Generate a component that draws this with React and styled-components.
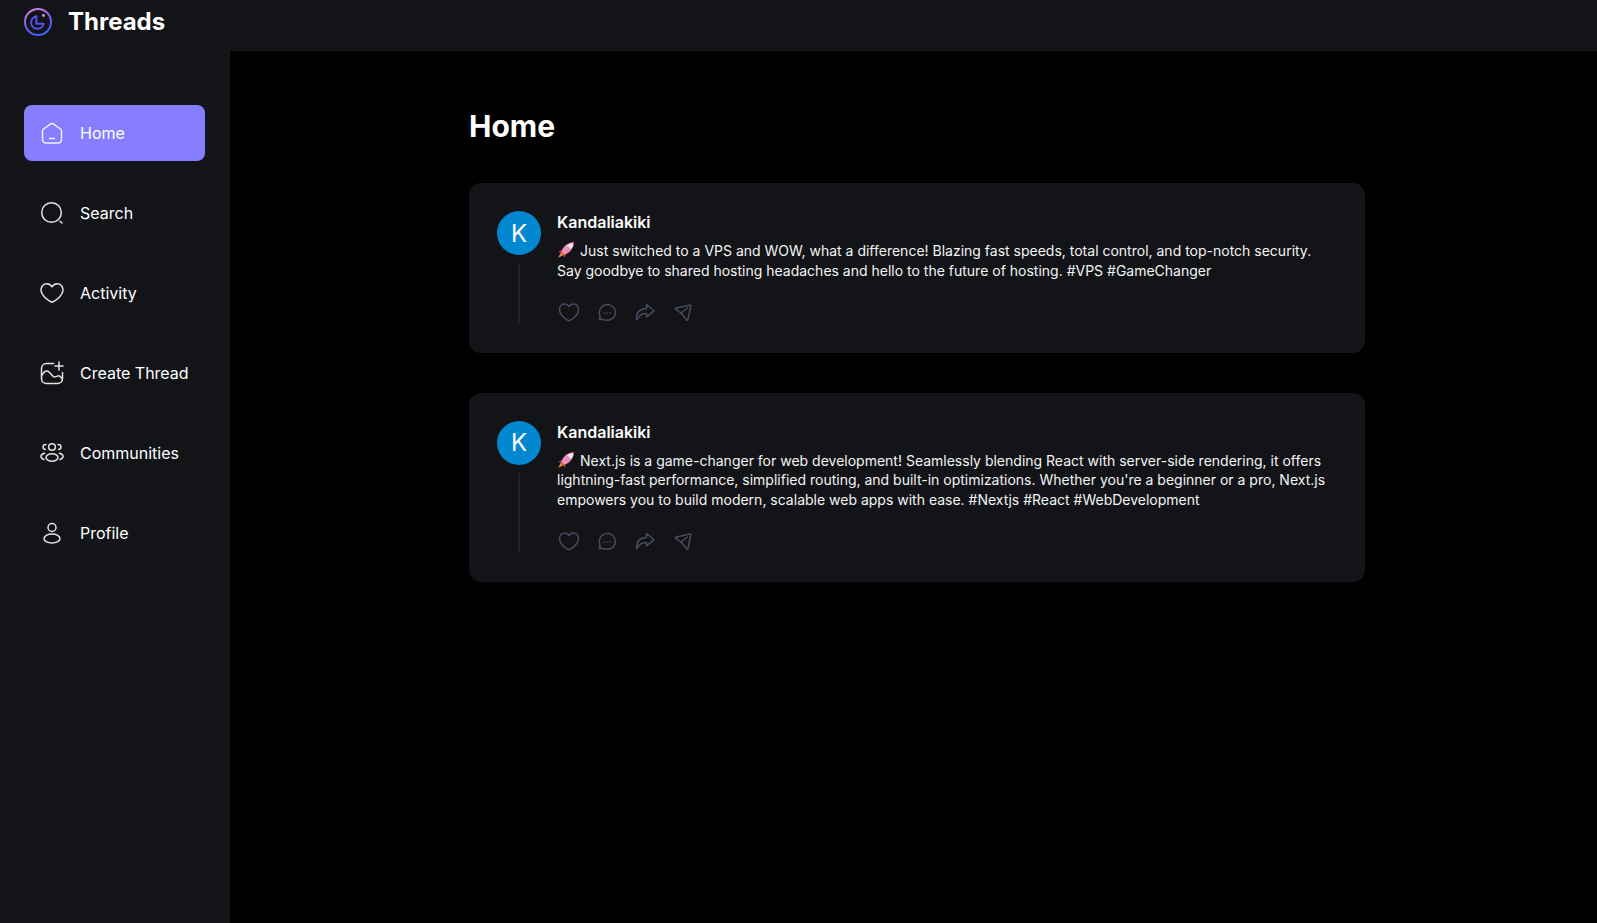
import React from 'react';
import styled, { createGlobalStyle } from 'styled-components';

const GlobalStyle = createGlobalStyle`
  * { box-sizing: border-box; }
  html, body { margin: 0; padding: 0; background: #000; }
  body { font-family: Inter, "Noto Sans", sans-serif; color: #fff; }
`;

const stroke = {
  fill: 'none',
  stroke: 'currentColor',
  strokeWidth: 1.5,
  strokeLinecap: 'round',
  strokeLinejoin: 'round',
};

const HomeIcon = () => (
  <svg width="24" height="24" viewBox="0 0 24 24" {...stroke}>
    <path d="M2.500 10.200c0-.9.4-1.700 1.100-2.200l6.700-4.900c1-.8 2.400-.8 3.400 0l6.700 4.900c.7.5 1.100 1.300 1.100 2.200v8.300c0 1.900-1.500 3.400-3.400 3.400H5.900c-1.900 0-3.400-1.500-3.400-3.400z" />
    <path d="M9.500 17.500h5" />
  </svg>
);

const SearchIcon = () => (
  <svg width="24" height="24" viewBox="0 0 24 24" {...stroke}>
    <circle cx="11.500" cy="11.500" r="9.800" />
    <path d="M20 20.200l2 1.800" />
  </svg>
);

const HeartIcon = () => (
  <svg width="24" height="24" viewBox="0 0 24 24" {...stroke}>
    <path d="M12 21.200C10.800 20.900 1 15.800 1 8.600 1 5.300 3.600 2.800 6.700 2.800c2.100 0 4 1 5.300 3 1.300-2 3.200-3 5.300-3 3.100 0 5.700 2.500 5.700 5.800 0 7.200-9.800 12.300-11 12.600z" />
  </svg>
);

const CreateIcon = () => (
  <svg width="24" height="24" viewBox="0 0 24 24" {...stroke}>
    <path d="M13.500 2.500H6.500C3.700 2.500 1.500 4.700 1.500 7.500v10c0 2.800 2.200 5 5 5h11c2.800 0 5-2.200 5-5v-6" />
    <path d="M19 1v8M15 5h8" />
    <path d="M1.500 15c1.800-3.500 4.200-5.500 6.300-4.800 2.300.8 3.500 4.200 5.700 5.400 2.600 1.400 4.500-1.600 5.700-.8 1.400.9 2.500 2 3.300 3.200" />
  </svg>
);

const CommunitiesIcon = () => (
  <svg width="24" height="24" viewBox="0 0 24 24" {...stroke}>
    <ellipse cx="12" cy="6" rx="3.400" ry="3.200" />
    <ellipse cx="12" cy="16.500" rx="6" ry="3.800" />
    <path d="M6 3.500C4.300 3.500 3 4.700 3 6.100c0 1.300 1 2.200 2.300 2.400" />
    <path d="M18 3.500c1.700 0 3 1.200 3 2.600 0 1.300-1 2.200-2.300 2.400" />
    <path d="M4.500 12.300C2.400 12.800 1 14 1 15.500c0 1.400 1.200 2.500 3 3" />
    <path d="M19.500 12.300c2.100.5 3.500 1.700 3.500 3.200 0 1.400-1.200 2.500-3 3" />
  </svg>
);

const ProfileIcon = () => (
  <svg width="24" height="24" viewBox="0 0 24 24" {...stroke}>
    <circle cx="12" cy="6.500" r="4" />
    <ellipse cx="12" cy="17.500" rx="8" ry="4.500" />
  </svg>
);

const Logo = () => (
  <svg width="28" height="28" viewBox="0 0 28 28" fill="none">
    <defs>
      <linearGradient id="logoRing" x1="8" y1="1" x2="18" y2="27" gradientUnits="userSpaceOnUse">
        <stop offset="0" stopColor="#d47be0" />
        <stop offset="0.5" stopColor="#7a5cf0" />
        <stop offset="1" stopColor="#2f66ff" />
      </linearGradient>
    </defs>
    <circle cx="14" cy="14" r="13" stroke="url(#logoRing)" strokeWidth="2" />
    <path d="M12.300 8.300a6.300 6.300 0 1 0 7.300 7.500h-7.300z" stroke="#5552f0" strokeWidth="2" strokeLinejoin="round" fill="none" />
    <circle cx="19.500" cy="7.500" r="1.400" fill="#c9a6f5" />
  </svg>
);

const Rocket = () => (
  <svg width="18" height="18" viewBox="0 0 16 16">
    <path d="M3.400 10.200L1 14.900l4.800-2.300z" fill="#f2802c" />
    <path d="M3.800 8.200L1.300 9.300l2 1.200z" fill="#e03a5c" />
    <path d="M7.800 12.200l-1.100 2.500-1.200-2z" fill="#e03a5c" />
    <path d="M3.600 10C5 5 9.400 1.300 15 1c-.3 5.600-4 10-9 11.400z" fill="#f58ab0" />
    <path d="M9 3.800c1.400-1.300 3.600-2.500 6-2.800-.1 2.400-1.300 4.600-2.700 6z" fill="#fbe3ea" />
    <path d="M12.200 1.300c1.200.4 2.100 1.300 2.500 2.500.2-.9.300-1.900.3-2.800-.9 0-1.900.1-2.800.3z" fill="#e03a5c" />
    <circle cx="9.700" cy="6.300" r="1.300" fill="#8fb4ea" />
  </svg>
);

const ActionHeart = () => (
  <svg width="24" height="24" viewBox="0 0 24 24" {...stroke}>
    <path d="M12 20.800C10.900 20.500 2.500 16 2.500 9.200c0-3 2.300-5.200 5-5.200 1.900 0 3.500.9 4.500 2.600C13 4.900 14.600 4 16.500 4c2.700 0 5 2.200 5 5.200 0 6.800-8.400 11.300-9.500 11.600z" />
  </svg>
);

const ActionReply = () => (
  <svg width="24" height="24" viewBox="0 0 24 24" {...stroke}>
    <path d="M4.800 19.200l-.9 1.700 2.600-.5c1.500.8 3.500 1.100 5.500 1.100 4.400 0 8-3.500 8-7.900s-3.600-7.900-8-7.900-8 3.500-8 7.900c0 1.900.4 3.400.8 5.600z" transform="translate(.4 -1.200)" />
    <path d="M9 13h.01M12 13h.01M15 13h.01" strokeWidth="1.700" />
  </svg>
);

const ActionRepost = () => (
  <svg width="24" height="24" viewBox="0 0 24 24" {...stroke}>
    <path d="M13.500 4.500l7.500 6.300-7.500 6v-3.300c-4.500-.2-7 1-9 5.500-.6 1-1 .4-1-.5C3.500 12.500 7 8.700 13.500 8.500z" />
  </svg>
);

const ActionSend = () => (
  <svg width="24" height="24" viewBox="0 0 24 24" {...stroke}>
    <path d="M4.500 8.200L19 5c.5-.1.900.3.800.8l-3 14c-.1.600-.8.700-1.100.2L10 13 4.600 9.300c-.5-.3-.4-.9-.1-1.100z" />
    <path d="M10 13l6.500-5" />
  </svg>
);

const Page = styled.div`
  min-height: 923px;
  display: flex;
  flex-direction: column;
  background: #000;
`;

const Topbar = styled.header`
  height: 51px;
  padding: 0 24px 8px;
  display: flex;
  align-items: center;
  gap: 16px;
  background: #121417;
`;

const Brand = styled.span`
  font-size: 24px;
  line-height: 32px;
  font-weight: 700;
  color: #fff;
`;

const Body = styled.div`
  flex: 1;
  display: flex;
`;

const Sidebar = styled.nav`
  width: 230px;
  flex-shrink: 0;
  padding: 54px 25px 0 24px;
  display: flex;
  flex-direction: column;
  gap: 24px;
  background: #121417;
`;

const NavItem = styled.a`
  height: 56px;
  padding: 0 16px;
  display: flex;
  align-items: center;
  gap: 16px;
  border-radius: 8px;
  font-size: 16px;
  font-weight: 400;
  white-space: nowrap;
  color: #fff;
  background: ${(p) => (p.$active ? '#877eff' : 'transparent')};

  svg {
    color: ${(p) => (p.$active ? '#f1efff' : '#e4e4e4')};
    flex-shrink: 0;
  }
`;

const Main = styled.main`
  flex: 1;
  padding: 57px 0 0 239px;
`;

const Column = styled.div`
  width: 896px;
`;

const Heading = styled.h1`
  margin: 0 0 39px;
  font-size: 30px;
  line-height: 36px;
  font-weight: 700;
  color: #fff;
`;

const Feed = styled.div`
  display: flex;
  flex-direction: column;
  gap: 40px;
`;

const Card = styled.article`
  padding: 28px 28px 28.4px;
  display: flex;
  gap: 16px;
  border-radius: 12px;
  background: #121417;
`;

const Side = styled.div`
  width: 44px;
  flex-shrink: 0;
  display: flex;
  flex-direction: column;
  align-items: center;
`;

const Avatar = styled.div`
  width: 44px;
  height: 44px;
  display: flex;
  align-items: center;
  justify-content: center;
  border-radius: 50%;
  font-size: 24px;
  color: #fff;
  background: #0288d1;
`;

const ThreadLine = styled.div`
  flex: 1;
  width: 2px;
  margin-top: 8px;
  background: #232327;
`;

const Content = styled.div`
  flex: 1;
  min-width: 0;
  padding-right: 8px;
`;

const Author = styled.h4`
  margin: -1px 0 7px;
  font-size: 16px;
  line-height: 24px;
  font-weight: 600;
  color: #fff;
`;

const Text = styled.p`
  margin: 0;
  font-size: 14px;
  line-height: 19.6px;
  color: #f4f4f4;

  svg {
    display: inline-block;
    vertical-align: -3px;
    margin-right: 5px;
  }
`;

const Actions = styled.div`
  margin-top: 20px;
  display: flex;
  gap: 14px;
  color: #4a4a60;
`;

const posts = [
  {
    id: 1,
    text: 'Just switched to a VPS and WOW, what a difference! Blazing fast speeds, total control, and top-notch security. Say goodbye to shared hosting headaches and hello to the future of hosting. #VPS #GameChanger',
  },
  {
    id: 2,
    text: "Next.js is a game-changer for web development! Seamlessly blending React with server-side rendering, it offers lightning-fast performance, simplified routing, and built-in optimizations. Whether you're a beginner or a pro, Next.js empowers you to build modern, scalable web apps with ease. #Nextjs #React #WebDevelopment",
  },
];

const links = [
  { label: 'Home', icon: <HomeIcon />, active: true },
  { label: 'Search', icon: <SearchIcon /> },
  { label: 'Activity', icon: <HeartIcon /> },
  { label: 'Create Thread', icon: <CreateIcon /> },
  { label: 'Communities', icon: <CommunitiesIcon /> },
  { label: 'Profile', icon: <ProfileIcon /> },
];

export default function App() {
  return (
    <>
      <GlobalStyle />
      <Page>
        <Topbar>
          <Logo />
          <Brand>Threads</Brand>
        </Topbar>
        <Body>
          <Sidebar>
            {links.map((link) => (
              <NavItem key={link.label} $active={link.active}>
                {link.icon}
                {link.label}
              </NavItem>
            ))}
          </Sidebar>
          <Main>
            <Column>
              <Heading>Home</Heading>
              <Feed>
                {posts.map((post) => (
                  <Card key={post.id}>
                    <Side>
                      <Avatar>K</Avatar>
                      <ThreadLine />
                    </Side>
                    <Content>
                      <Author>Kandaliakiki</Author>
                      <Text>
                        <Rocket />
                        {post.text}
                      </Text>
                      <Actions>
                        <ActionHeart />
                        <ActionReply />
                        <ActionRepost />
                        <ActionSend />
                      </Actions>
                    </Content>
                  </Card>
                ))}
              </Feed>
            </Column>
          </Main>
        </Body>
      </Page>
    </>
  );
}
